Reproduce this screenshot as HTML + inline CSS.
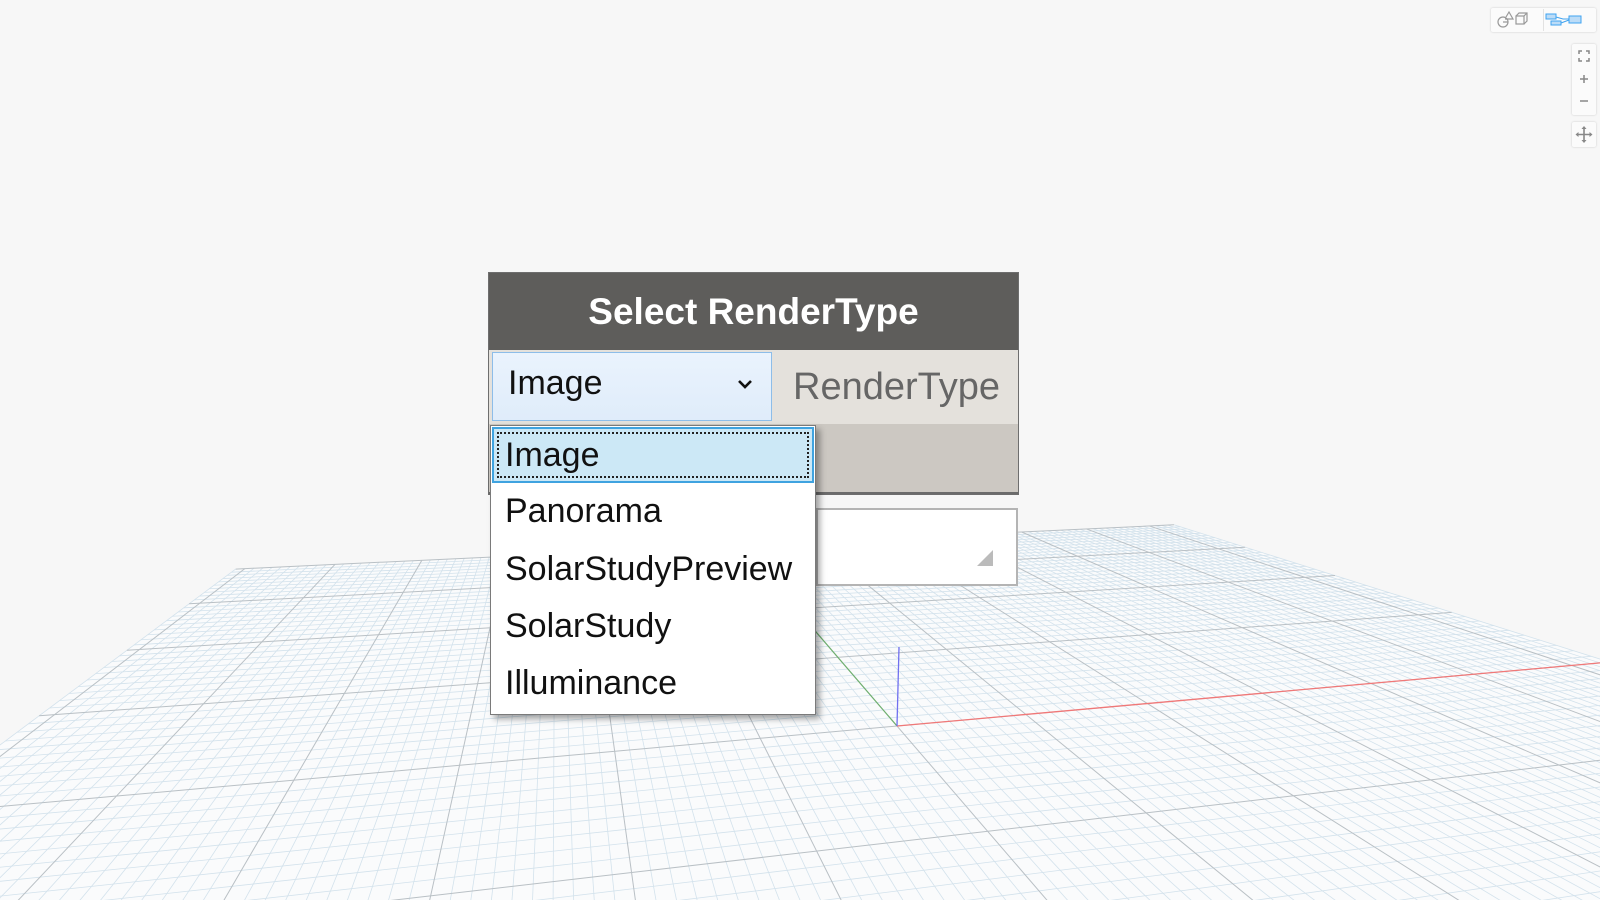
<!DOCTYPE html>
<html><head><meta charset="utf-8">
<style>
html,body{margin:0;padding:0;width:1600px;height:900px;overflow:hidden;background:#f7f7f7;font-family:"Liberation Sans","DejaVu Sans",sans-serif}
#g{position:absolute;left:0;top:0;overflow:hidden}
.abs{position:absolute}
</style></head><body>
<svg id="g" width="1600" height="900"></svg>

<!-- top-right toolbar -->
<div class="abs" style="left:1491px;top:8px;width:105px;height:24px;background:#fbfbfb;box-shadow:0 0 2px rgba(0,0,0,.18);border-radius:2px">
 <div class="abs" style="left:52px;top:1px;width:1px;height:22px;background:#e2e2e2"></div>
 <svg class="abs" style="left:0;top:0" width="105" height="24">
  <g fill="none" stroke="#999" stroke-width="1.2">
   <circle cx="12" cy="14" r="5"/><path d="M12 14 L17 14 M15 9 L18 4 L22 11 L14 11"/>
   <rect x="25" y="8" width="8" height="8"/><path d="M25 8 L28 5 L36 5 L36 13 L33 16 M33 8 L36 5"/>
  </g>
  <g fill="#bcdcf7" stroke="#3fa3f0" stroke-width="1">
   <rect x="55" y="6" width="10" height="5"/><rect x="60" y="13" width="10" height="4"/><rect x="78" y="8" width="12" height="7"/>
   <path d="M65 9 L72 11 L78 11 M70 15 L78 12" fill="none"/>
  </g>
 </svg>
</div>
<div class="abs" style="left:1572px;top:44px;width:24px;height:71px;background:#fbfbfb;box-shadow:0 0 2px rgba(0,0,0,.18);border-radius:2px">
 <svg width="24" height="71"><g stroke="#888" stroke-width="1.5" fill="none">
  <path d="M7 10 V7 H10 M14 7 H17 V10 M17 14 V17 H14 M10 17 H7 V14"/>
  <path d="M12 31 V39 M8 35 H16"/><path d="M8 57 H16"/></g></svg>
</div>
<div class="abs" style="left:1572px;top:122px;width:24px;height:25px;background:#fbfbfb;box-shadow:0 0 2px rgba(0,0,0,.18);border-radius:2px">
 <svg width="24" height="25"><g stroke="#888" stroke-width="1.6" fill="#888"><path d="M12 6 V19 M5.5 12.5 H18.5"/>
 <path d="M12 4 L9.5 7 H14.5Z M12 21 L9.5 18 H14.5Z M3.5 12.5 L6.5 10 V15Z M20.5 12.5 L17.5 10 V15Z" stroke="none"/></g></svg>
</div>

<!-- node -->
<div class="abs" style="left:489px;top:273px;width:529px;height:221px;background:#ccc8c2;box-shadow:0 0 0 1px #6e6e6e;">
 <div class="abs" style="left:0;top:0;width:529px;height:77px;background:#5e5d5b;color:#fff;font-weight:bold;font-size:37px;line-height:77px;text-align:center">Select RenderType</div>
 <div class="abs" style="left:0;top:77px;width:529px;height:74px;background:#e4e1dc"></div>
 <div class="abs" style="left:3px;top:79px;width:280px;height:69px;background:linear-gradient(#eaf3fd,#dfecfa);border:1px solid #8dbde9;box-sizing:border-box"></div>
 <div class="abs" style="left:19px;top:91px;font-size:34px;color:#111">Image</div>
 <svg class="abs" style="left:248px;top:106px" width="16" height="12"><path d="M2 2 L8 8 L14 2" fill="none" stroke="#111" stroke-width="2.6"/></svg>
 <div class="abs" style="left:304px;top:93px;font-size:38px;color:#666">RenderType</div>
 <div class="abs" style="left:0;top:219px;width:529px;height:2px;background:#6b6b6b"></div>
</div>
<div class="abs" style="left:816px;top:508px;width:202px;height:78px;background:#fff;border:2px solid #b4b4b4;box-sizing:border-box"></div>
<svg class="abs" style="left:976px;top:548px" width="20" height="20"><path d="M1 18 L17 18 L17 2Z" fill="#bbb"/></svg>

<!-- popup -->
<div class="abs" style="left:490px;top:425px;width:326px;height:290px;background:#fff;border:1px solid #7a7a7a;box-sizing:border-box;box-shadow:4px 4px 6px rgba(0,0,0,.35)">
 <div class="abs" style="left:1px;top:1px;width:322px;height:56px;background:#cce8f6;border:2px solid #3fa3e0;box-sizing:border-box">
  <div class="abs" style="left:3px;top:3px;right:3px;bottom:3px;border:2px dotted #222"></div>
 </div>
 <div class="abs" style="left:14px;top:9px;font-size:34px;color:#111;line-height:40px">Image</div>
 <div class="abs" style="left:14px;top:65px;font-size:34px;color:#111;line-height:40px">Panorama</div>
 <div class="abs" style="left:14px;top:123px;font-size:34px;color:#111;line-height:40px">SolarStudyPreview</div>
 <div class="abs" style="left:14px;top:180px;font-size:34px;color:#111;line-height:40px">SolarStudy</div>
 <div class="abs" style="left:14px;top:237px;font-size:34px;color:#111;line-height:40px">Illuminance</div>
</div>

<script>
(function(){
 var a=0.003,b=0.021,NS="http://www.w3.org/2000/svg",svg=document.getElementById('g');
 function P(u,v){var d=a*u+b*v+1;return [(a*5320*u+b*556*v+897)/d,(a*329*u+b*330*v+726)/d];}
 var umin=-61,umax=64,vmin=-30,vmax=40;
 var poly=document.createElementNS(NS,'polygon');
 var c=[P(umin,vmin),P(umax,vmin),P(umax,vmax),P(umin,vmax)];
 poly.setAttribute('points',c.map(function(p){return p.join(',')}).join(' '));
 poly.setAttribute('fill','#fafbfc');svg.appendChild(poly);
 function L(p,q,col,w){var l=document.createElementNS(NS,'line');l.setAttribute('x1',p[0]);l.setAttribute('y1',p[1]);l.setAttribute('x2',q[0]);l.setAttribute('y2',q[1]);l.setAttribute('stroke',col);l.setAttribute('stroke-width',w);svg.appendChild(l);}
 for(var pass=0;pass<2;pass++){
  for(var u=umin;u<=umax;u++){var maj=(u%10===0);if((pass==1)!=maj)continue;L(P(u,vmin),P(u,vmax),maj?'#b9c0c5':'#d3e2ec',maj?1:0.8);}
  for(var v=vmin;v<=vmax;v++){var maj=(v%10===0);if((pass==1)!=maj)continue;L(P(umin,v),P(umax,v),maj?'#b9c0c5':'#d3e2ec',maj?1:0.8);}
 }
 L(P(0,0),P(umax,0),'#f07878',1.3);
 L(P(0,0),P(0,vmax),'#6fb06f',1.2);
 L([897,726],[899,647],'#7070f0',1.3);
})();
</script>
</body></html>
